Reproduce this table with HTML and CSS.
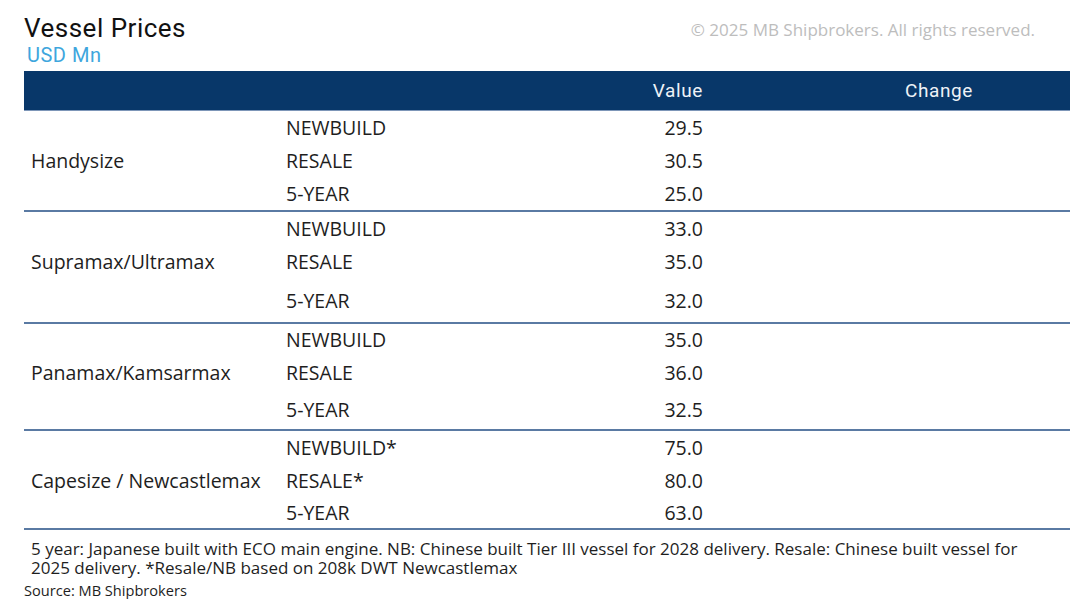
FILE: index.html
```html
<!DOCTYPE html>
<html>
<head>
<meta charset="utf-8">
<link rel="stylesheet" href="styles.css">
</head>
<body>
<div class="page">
  <div class="top">
    <div class="titles">
      <div class="title">Vessel Prices</div>
      <div class="subtitle">USD Mn</div>
    </div>
    <div class="copy">© 2025 MB Shipbrokers. All rights reserved.</div>
  </div>
  <div class="head">
    <div></div><div></div>
    <div class="hv">Value</div>
    <div class="hc">Change</div>
  </div>
  <div class="group g1">
    <div class="cat">Handysize</div>
    <div class="typ">NEWBUILD</div><div class="val">29.5</div><div class="chg"></div>
    <div class="typ">RESALE</div><div class="val">30.5</div><div class="chg"></div>
    <div class="typ">5-YEAR</div><div class="val">25.0</div><div class="chg"></div>
  </div>
  <div class="group g2">
    <div class="cat">Supramax/Ultramax</div>
    <div class="typ">NEWBUILD</div><div class="val">33.0</div><div class="chg"></div>
    <div class="typ">RESALE</div><div class="val">35.0</div><div class="chg"></div>
    <div class="typ">5-YEAR</div><div class="val">32.0</div><div class="chg"></div>
  </div>
  <div class="group g3">
    <div class="cat">Panamax/Kamsarmax</div>
    <div class="typ">NEWBUILD</div><div class="val">35.0</div><div class="chg"></div>
    <div class="typ">RESALE</div><div class="val">36.0</div><div class="chg"></div>
    <div class="typ">5-YEAR</div><div class="val">32.5</div><div class="chg"></div>
  </div>
  <div class="group g4">
    <div class="cat">Capesize / Newcastlemax</div>
    <div class="typ">NEWBUILD*</div><div class="val">75.0</div><div class="chg"></div>
    <div class="typ">RESALE*</div><div class="val">80.0</div><div class="chg"></div>
    <div class="typ">5-YEAR</div><div class="val">63.0</div><div class="chg"></div>
  </div>
  <div class="note">5 year: Japanese built with ECO main engine. NB: Chinese built Tier III vessel for 2028 delivery. Resale: Chinese built vessel for 2025 delivery. *Resale/NB based on 208k DWT Newcastlemax</div>
  <div class="source">Source: MB Shipbrokers</div>
</div>
</body>
</html>
```
FILE: styles.css
```css
html, body {
  margin: 0;
  padding: 0;
  background: #ffffff;
}
.page {
  width: 1046px;
  padding: 0 0 0 24px;
  font-family: "Open Sans", "Noto Sans", sans-serif;
  color: #1e1e1e;
}
.top {
  display: flex;
  justify-content: space-between;
  align-items: flex-start;
  height: 71px;
}
.title {
  font-family: Roboto, "Noto Sans", sans-serif;
  font-size: 26px;
  line-height: 30px;
  padding-top: 13px;
  color: #111;
  letter-spacing: 0.5px;
}
.subtitle {
  font-family: Roboto, "Noto Sans", sans-serif;
  font-size: 20px;
  line-height: 22px;
  padding-left: 3px;
  padding-top: 1px;
  color: #3ea6dd;
  letter-spacing: 0.5px;
}
.copy {
  font-size: 17px;
  color: #bdbdbd;
  padding-top: 18px;
  padding-right: 35px;
}
.head, .group {
  display: grid;
  grid-template-columns: 262px 326px 91px 270px 1fr;
}
.head {
  background: #083769;
  height: 40px;
  align-items: center;
  border-bottom: 1px solid #7d96b8;
  box-sizing: border-box;
  font-family: Roboto, "Noto Sans", sans-serif;
  font-size: 19px;
  color: #eef2f7;
  letter-spacing: 0.6px;
}
.hv { text-align: right; }
.hc { text-align: right; }
.group {
  border-bottom: 2px solid #5a7aa3;
  font-size: 19.5px;
  align-items: center;
}
.group .cat {
  grid-column: 1;
  grid-row: 2;
  padding-left: 7px;
}
.typ { grid-column: 2; }
.val { grid-column: 3; text-align: right; }
.chg { grid-column: 4; }
.g1 { grid-template-rows: 32px 34px 33px; }
.g2 { grid-template-rows: 33px 33px 44px; }
.g3 { grid-template-rows: 31px 35px 39px; }
.g4 { grid-template-rows: 32px 34px 31px; }
.note {
  font-size: 17px;
  line-height: 19px;
  padding: 9px 0 0 7px;
  width: 1005px;
}
.source {
  font-size: 14.6px;
  line-height: 18px;
  padding-top: 4px;
}
```
